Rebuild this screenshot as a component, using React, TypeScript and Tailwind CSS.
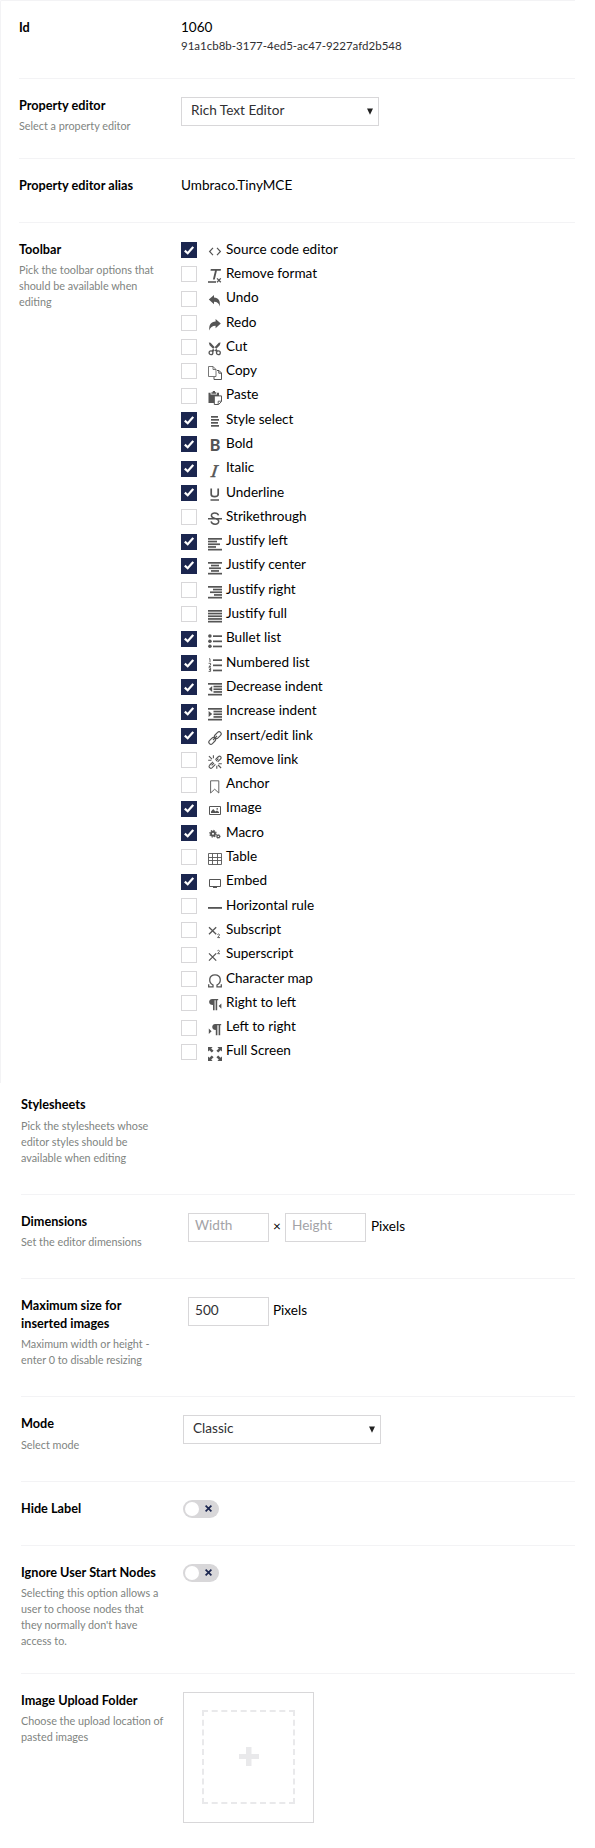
import { ReactNode } from "react";

const INK = "#555";

const bars = (rows: [number, number, number][]) =>
  rows.map(([x, y, w], i) => <rect key={i} x={x} y={y} width={w} height={1.7} />);

const tools: { name: string; on?: boolean; icon: ReactNode }[] = [
  {
    name: "Source code editor",
    on: true,
    icon: <path d="M5 2.9L1.6 6.5L5 10.1M9 2.9L12.4 6.5L9 10.1" fill="none" stroke={INK} strokeWidth="1.2" />,
  },
  {
    name: "Remove format",
    icon: (
      <>
        <path d="M2.8 0H13L12.7 1.8H8.9L6.8 10.6H4.9L7 1.8H2.5Z" />
        <path d="M0 12.2H8V13.8H0Z" />
        <path d="M9 9.4L12.8 13.2M12.8 9.4L9 13.2" stroke={INK} strokeWidth="1.3" />
      </>
    ),
  },
  {
    name: "Undo",
    icon: <path d="M0.8 5.5L6 1V3.6C10.5 3.8 12.7 7 11.6 12.4C11 9.2 9.4 7.7 6 7.7V10.3Z" />,
  },
  {
    name: "Redo",
    icon: <path d="M12.8 5.5L7.6 1V3.6C3 3.8 0.6 7 1.4 12.4C2.4 9.2 4.2 7.7 7.6 7.7V10.3Z" />,
  },
  {
    name: "Cut",
    icon: (
      <>
        <path d="M0.8 0.5L2.6 0.8L9.8 8.4L8.3 9.9L1.6 3.2ZM12.6 0.5L10.8 0.8L3.6 8.4L5.1 9.9L11.8 3.2Z" />
        <circle cx="3" cy="10.7" r="1.9" fill="none" stroke={INK} strokeWidth="1.3" />
        <circle cx="10.4" cy="10.7" r="1.9" fill="none" stroke={INK} strokeWidth="1.3" />
      </>
    ),
  },
  {
    name: "Copy",
    icon: (
      <g fill="none" stroke={INK}>
        <path d="M5 10.5H0.5V0.5H5L8 3.5V10.5H5M5 0.5V3.5H8" strokeWidth="0.8" />
        <path d="M9 4.5H11L13.5 7V13.5H6V11M10.8 4.5V7.2H13.5" strokeWidth="1" />
      </g>
    ),
  },
  {
    name: "Paste",
    icon: (
      <>
        <path d="M0.5 1.8H2.6V3.6H9V1.8H11V12H0.5Z" />
        <path d="M3.4 1.2H4.8V0H7V1.2H8.3V2.8H3.4Z" />
        <path d="M6.3 4.9H13.5V10.5L10.6 13.5H6.3Z" fill="#fff" stroke={INK} strokeWidth="1" />
        <path d="M10.2 13.3V10.2H13.3" fill="none" stroke={INK} strokeWidth="0.9" />
      </>
    ),
  },
  { name: "Style select", on: true, icon: bars([[3, 1, 7], [3, 4, 8], [3, 7, 7], [3, 10, 8]]) },
  {
    name: "Bold",
    on: true,
    icon: (
      <text x="1.8" y="12.4" fontFamily="Lato, sans-serif" fontWeight="900" fontSize="16">B</text>
    ),
  },
  {
    name: "Italic",
    on: true,
    icon: (
      <text
        transform="translate(2.6 12.6) skewX(-8)"
        fontFamily="Liberation Serif, serif"
        fontStyle="italic"
        fontSize="18"
        stroke={INK}
        strokeWidth="0.5"
      >
        I
      </text>
    ),
  },
  {
    name: "Underline",
    on: true,
    icon: (
      <path d="M3.2 0.6V6.2C3.2 9.4 10.2 9.4 10.2 6.2V0.6M2.5 12H11" fill="none" stroke={INK} strokeWidth="1.7" />
    ),
  },
  {
    name: "Strikethrough",
    icon: (
      <path
        d="M10.5 3.4C9.8 0.4 3.4 0.2 3.4 3.5C3.4 5.6 5.2 6 7 6.4C9.6 7 10.9 7.8 10.7 9.8C10.3 13.1 3.8 13 3.1 9.4M0 6.7H14"
        fill="none"
        stroke={INK}
        strokeWidth="1.5"
      />
    ),
  },
  { name: "Justify left", on: true, icon: bars([[0, 1, 14], [0, 3.7, 9], [0, 6.4, 12], [0, 9.1, 8], [0, 11.8, 14]]) },
  { name: "Justify center", on: true, icon: bars([[0, 1, 14], [3, 3.7, 8], [1, 6.4, 12], [3, 9.1, 8], [0, 11.8, 14]]) },
  { name: "Justify right", icon: bars([[0, 1, 14], [5, 3.7, 9], [2, 6.4, 12], [6, 9.1, 8], [0, 11.8, 14]]) },
  { name: "Justify full", icon: bars([[0, 1, 14], [0, 3.7, 14], [0, 6.4, 14], [0, 9.1, 14], [0, 11.8, 14]]) },
  {
    name: "Bullet list",
    on: true,
    icon: (
      <>
        <circle cx="1.9" cy="2" r="1.8" />
        <circle cx="1.9" cy="7.3" r="1.8" />
        <circle cx="1.9" cy="12.2" r="1.8" />
        {bars([[5, 1.3, 9], [5, 6.5, 9], [5, 11.6, 9]])}
      </>
    ),
  },
  {
    name: "Numbered list",
    on: true,
    icon: (
      <>
        <path
          d="M1 0.8H2V4M0.6 5.3H2.6V7L0.9 8.6H3M0.6 9.8H2.6V11.6H1.2H2.6V13.4H0.6"
          fill="none"
          stroke={INK}
          strokeWidth="0.9"
        />
        {bars([[5, 1.3, 9], [5, 6.5, 9], [5, 11.6, 9]])}
      </>
    ),
  },
  {
    name: "Decrease indent",
    on: true,
    icon: (
      <>
        {bars([[0, 1, 14], [5.5, 3.7, 8.5], [5.5, 6.4, 8.5], [5.5, 9.1, 8.5], [0, 11.8, 14]])}
        <path d="M4.2 4V10L0.8 7Z" />
      </>
    ),
  },
  {
    name: "Increase indent",
    on: true,
    icon: (
      <>
        {bars([[0, 1, 14], [5.5, 3.7, 8.5], [5.5, 6.4, 8.5], [5.5, 9.1, 8.5], [0, 11.8, 14]])}
        <path d="M0.6 4V10L4.2 7Z" />
      </>
    ),
  },
  {
    name: "Insert/edit link",
    on: true,
    icon: (
      <g fill="none" stroke={INK} strokeWidth="1.1">
        <rect x="-3.9" y="-2.1" width="7.8" height="4.2" rx="2.1" transform="translate(9.8 4.2) rotate(-45)" />
        <rect x="-3.9" y="-2.1" width="7.8" height="4.2" rx="2.1" transform="translate(4.2 9.8) rotate(-45)" />
        <path d="M5 9L9 5" />
      </g>
    ),
  },
  {
    name: "Remove link",
    icon: (
      <g fill="none" stroke={INK} strokeWidth="1.1">
        <path d="M7.4 4.6L10 2C12 0 14.2 2.2 12.4 4.2L9.6 6.8M6 8L3.6 10.4" />
        <path d="M5 6.8L1.8 10C0 12 2.2 14.4 4.2 12.6L7.4 9.4M8 6L10.4 3.6" />
        <path d="M0.2 5.2H3.4M0.9 1.2L4 4.2M5.4 0.2V3.2M13.8 8.8H10.6M13.1 13L10 10M8.8 13.8V10.8" />
      </g>
    ),
  },
  {
    name: "Anchor",
    icon: <path d="M2.6 0.8H10.8V13L6.7 9.2L2.6 13Z" fill="none" stroke={INK} strokeWidth="0.9" />,
  },
  {
    name: "Image",
    on: true,
    icon: (
      <>
        <path d="M1.5 2.5H12.5V10.5H1.5Z" fill="none" stroke={INK} strokeWidth="1" />
        <path d="M3 9V7.4L5.2 5L7.4 7.4L9 6.4L11 8V9Z" />
        <circle cx="9.2" cy="4.9" r="0.8" />
      </>
    ),
  },
  {
    name: "Macro",
    on: true,
    icon: (
      <g fill="none" stroke={INK}>
        <circle cx="5" cy="5.7" r="2" strokeWidth="1.9" />
        <circle cx="5" cy="5.7" r="3.3" strokeWidth="1.1" strokeDasharray="1.3 1.29" />
        <circle cx="10.3" cy="8.4" r="1.3" strokeWidth="1.2" />
        <circle cx="10.3" cy="8.4" r="2" strokeWidth="0.7" strokeDasharray="0.8 0.77" />
      </g>
    ),
  },
  {
    name: "Table",
    icon: (
      <path
        d="M0.5 1.5H13.5V12.5H0.5ZM0.5 5.5H13.5M0.5 8.5H13.5M4.5 1.5V12.5M9.5 1.5V12.5"
        fill="none"
        stroke={INK}
        strokeWidth="0.9"
      />
    ),
  },
  {
    name: "Embed",
    on: true,
    icon: (
      <>
        <path d="M1.5 2.5H12.5V9.5H1.5Z" fill="none" stroke={INK} strokeWidth="1" />
        <path d="M5 10H9V11H5Z" />
      </>
    ),
  },
  { name: "Horizontal rule", icon: <rect x="0" y="6" width="14" height="1.8" /> },
  {
    name: "Subscript",
    icon: (
      <>
        <path d="M1 2.2L8.2 9.2M8.2 2.2L1 9.2" stroke={INK} strokeWidth="1.3" />
        <path d="M9.4 9.6C10 8.6 11.8 8.8 11.4 10.2L9.6 12.6H12" fill="none" stroke={INK} strokeWidth="0.9" />
      </>
    ),
  },
  {
    name: "Superscript",
    icon: (
      <>
        <path d="M1 3.4L8.2 10.6M8.2 3.4L1 10.6" stroke={INK} strokeWidth="1.3" />
        <path d="M9.4 0.9C10 0 11.8 0.2 11.4 1.5L9.6 3.7H12" fill="none" stroke={INK} strokeWidth="0.9" />
      </>
    ),
  },
  {
    name: "Character map",
    icon: (
      <path
        d="M0.7 10.3V12.9H5V11C0 8.2 0.8 0.8 7 0.8C13.2 0.8 14 8.2 9 11V12.9H13.3V10.3"
        fill="none"
        stroke={INK}
        strokeWidth="1.3"
      />
    ),
  },
  {
    name: "Right to left",
    icon: (
      <>
        <path d="M4.2 0.9H10.2V2.3H9.2V12.2H7.6V2.3H6.6V12.2H5V7C0 7 0 0.9 4.2 0.9Z" />
        <path d="M13.4 5.4V10.8L10.6 8.1Z" />
      </>
    ),
  },
  {
    name: "Left to right",
    icon: (
      <>
        <path d="M7.2 0.9H13.2V2.3H12.2V12.2H10.6V2.3H9.4V12.2H7.8V7C3.2 7 3.2 0.9 7.2 0.9Z" />
        <path d="M0.8 5.6V11L3.6 8.3Z" />
      </>
    ),
  },
  {
    name: "Full Screen",
    icon: (
      <>
        <path d="M0 0H4.6L3.2 1.4L5.6 3.8L3.8 5.6L1.4 3.2L0 4.6ZM14 0H9.4L10.8 1.4L8.4 3.8L10.2 5.6L12.6 3.2L14 4.6Z" />
        <path d="M0 14H4.6L3.2 12.6L5.6 10.2L3.8 8.4L1.4 10.8L0 9.4ZM14 14H9.4L10.8 12.6L8.4 10.2L10.2 8.4L12.6 10.8L14 9.4Z" />
      </>
    ),
  },
];

type RowProps = { label: string; hint?: string; size: string; hintGap?: string; children?: ReactNode };

function Row({ label, hint, size, hintGap = "mt-1", children }: RowProps) {
  return (
    <div className={`flex items-start border-[#f3f3f5] ${size}`}>
      <div className="w-[162px] shrink-0 pr-[19px] pt-[17px]">
        <div className="text-[12.7px] font-bold leading-[18px] text-black">{label}</div>
        {hint && (
          <div className={`w-[150px] whitespace-pre-line text-[10.8px] leading-4 text-[#80847f] ${hintGap}`}>{hint}</div>
        )}
      </div>
      {children}
    </div>
  );
}

function Select({ value }: { value: string }) {
  return (
    <div className="mt-[18px] flex h-[29px] w-[198px] items-center justify-between border border-[#d8d7d9] pl-[9px] pr-[5px]">
      <span className="-mt-[3px] text-[13.6px] leading-[18px] text-[#303033]">{value}</span>
      <svg width="6" height="7" viewBox="0 0 6 7">
        <path d="M0 0.5H6L3 6.8Z" fill="#222" />
      </svg>
    </div>
  );
}

function Box({ children, dim }: { children: ReactNode; dim?: boolean }) {
  return (
    <div
      className={`h-[29px] w-[81px] border border-[#d8d7d9] pl-[6px] text-[13.6px] leading-[19px] ${
        dim ? "pt-[2px] text-[#a3a3a7]" : "pt-[3px] text-[#303033]"
      }`}
    >
      {children}
    </div>
  );
}

function Toggle() {
  return (
    <div className="mt-[18px] flex h-[18px] w-9 items-center justify-between rounded-full bg-[#d8d7d9] pl-[2px] pr-[7px]">
      <div className="size-[14px] rounded-full bg-white" />
      <svg width="7" height="7" viewBox="0 0 7 7" className="-mt-[1px]">
        <path d="M0.6 0.6L6.4 6.4M6.4 0.6L0.6 6.4" stroke="#1b264f" strokeWidth="1.7" />
      </svg>
    </div>
  );
}

function Check({ on }: { on?: boolean }) {
  return on ? (
    <div className="flex size-4 items-center justify-center bg-[#1b264f]">
      <svg width="10" height="9" viewBox="0 0 10 9">
        <path d="M0.8 4.6L3.7 7.2L9.2 0.9" fill="none" stroke="#fff" strokeWidth="2.2" />
      </svg>
    </div>
  ) : (
    <div className="size-4 border border-[#d8d7d9] bg-white" />
  );
}

export default function App() {
  return (
    <div className="h-[1848px] w-[595px] bg-white font-['Lato',sans-serif] text-[13.55px] text-black">
      <div className="h-[1083px] w-[575px] rounded-tl-[2px] border-l border-t border-[#f3f3f5] pl-[18px]">
        <Row label="Id" size="h-[78px] border-b">
          <div className="pt-[17px]">
            <div className="leading-[18px]">1060</div>
            <div className="mt-px text-[11.5px] leading-[18px] text-[#303033]">91a1cb8b-3177-4ed5-ac47-9227afd2b548</div>
          </div>
        </Row>
        <Row label="Property editor" hint="Select a property editor" size="h-20 border-b">
          <Select value="Rich Text Editor" />
        </Row>
        <Row label="Property editor alias" size="h-16 border-b">
          <div className="pt-[17px] leading-[18px]">Umbraco.TinyMCE</div>
        </Row>
        <Row
          label="Toolbar"
          hint={"Pick the toolbar options that\nshould be available when\nediting"}
          size="h-[860px]"
        >
          <div className="flex flex-col pt-[19px]">
            {tools.map((t) => (
              <div key={t.name} className="flex h-[24.3px] shrink-0 items-start">
                <Check on={t.on} />
                <svg
                  width="14"
                  height="14"
                  viewBox="0 0 14 14"
                  fill={INK}
                  className="ml-[11px] mt-[3px] overflow-visible"
                >
                  {t.icon}
                </svg>
                <span className="-mt-[2.4px] ml-1 leading-[18px]">{t.name}</span>
              </div>
            ))}
          </div>
        </Row>
      </div>
      <div className="w-[575px] pl-[21px]">
        <Row
          label="Stylesheets"
          hint={"Pick the stylesheets whose\neditor styles should be\navailable when editing"}
          size="-mt-[5px] h-[117px] border-b"
          hintGap="mt-[5px]"
        />
        <Row label="Dimensions" hint="Set the editor dimensions" size="h-[84px] border-b">
          <div className="ml-[5px] mt-[18px] flex">
            <Box dim>Width</Box>
            <span className="w-4 pt-[4px] text-center leading-[18px]">×</span>
            <Box dim>Height</Box>
            <span className="ml-[5px] pt-[4px] leading-[18px]">Pixels</span>
          </div>
        </Row>
        <Row
          label="Maximum size for inserted images"
          hint={"Maximum width or height -\nenter 0 to disable resizing"}
          size="h-[118px] border-b"
        >
          <div className="ml-[5px] mt-[18px] flex">
            <Box>500</Box>
            <span className="ml-1 pt-1 leading-[18px]">Pixels</span>
          </div>
        </Row>
        <Row label="Mode" hint="Select mode" size="h-[85px] border-b" hintGap="mt-[5px]">
          <Select value="Classic" />
        </Row>
        <Row label="Hide Label" size="h-16 border-b">
          <Toggle />
        </Row>
        <Row
          label="Ignore User Start Nodes"
          hint={"Selecting this option allows a\nuser to choose nodes that\nthey normally don't have\naccess to."}
          size="h-32 border-b"
        >
          <Toggle />
        </Row>
        <Row label="Image Upload Folder" hint={"Choose the upload location of\npasted images"} size="h-[174px]">
          <div className="mt-[18px] flex h-[131px] w-[131px] justify-center border border-[#d8d7d9] pt-[17px]">
            <div className="flex h-[94px] w-[93px] items-center justify-center border-2 border-dashed border-[#e9e9eb]">
              <svg width="20" height="20" viewBox="0 0 20 20" fill="#e9e9eb">
                <path d="M0 7H7V0H12.5V7H20V12H12.5V19H7V12H0Z" />
              </svg>
            </div>
          </div>
        </Row>
      </div>
    </div>
  );
}
